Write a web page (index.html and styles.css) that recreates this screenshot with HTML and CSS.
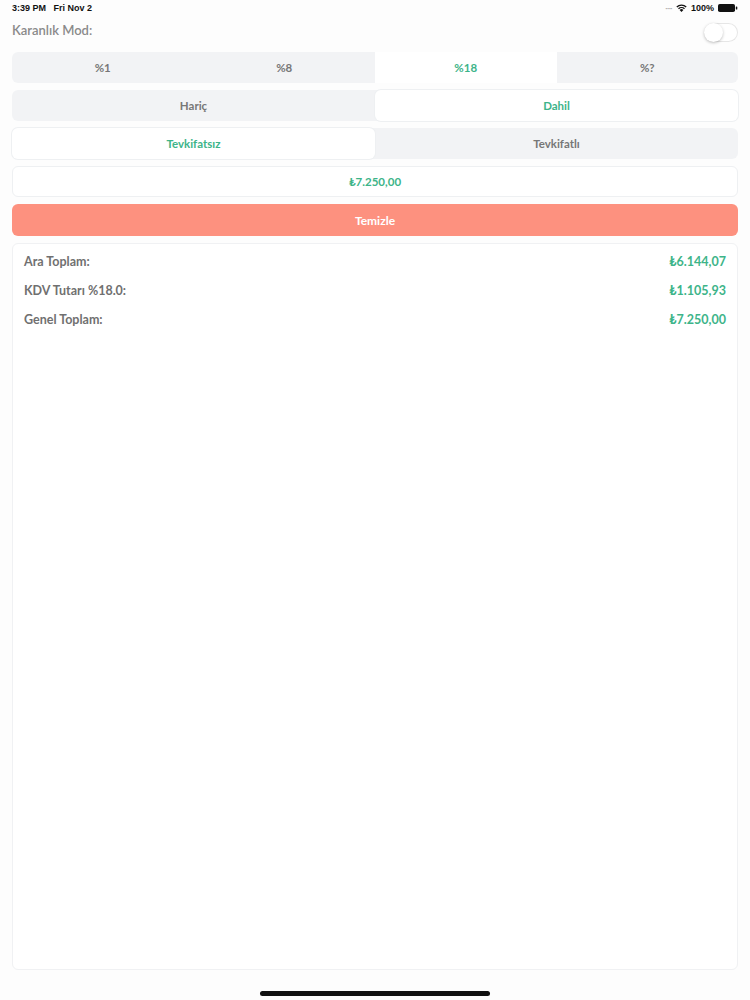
FILE: index.html
```html
<!DOCTYPE html>
<html lang="tr">
<head>
  <meta charset="UTF-8" />
  <meta name="viewport" content="width=device-width, initial-scale=1.0"/>
  <title>KDV Hesaplama</title>
  <link rel="stylesheet" href="styles.css">
</head>
<body>
  <div class="status">
    <span class="time">3:39 PM&nbsp;&nbsp; Fri Nov 2</span>
    <span class="status-right">
      <span class="dots">····</span>
      <svg width="11" height="8" viewBox="0 0 11 8">
        <path d="M5.5 8 L3.6 5.9 A2.7 2.7 0 0 1 7.4 5.9 Z" fill="#111"/>
        <path d="M2.5 4.8 A4.3 4.3 0 0 1 8.5 4.8" stroke="#111" stroke-width="1.3" fill="none"/>
        <path d="M0.8 3 A6.6 6.6 0 0 1 10.2 3" stroke="#111" stroke-width="1.3" fill="none"/>
      </svg>
      <span>100%</span>
      <svg width="20" height="8" viewBox="0 0 20 8">
        <rect x="0" y="0" width="17" height="8" rx="1.8" fill="#111"/>
        <rect x="17.8" y="2.5" width="1.5" height="3" rx="0.6" fill="#111"/>
      </svg>
    </span>
  </div>

  <div class="mode">
    <span>Karanlık Mod:</span>
    <div class="toggle"><div class="knob"></div></div>
  </div>

  <div class="seg seg-4">
    <div class="seg-item">%1</div>
    <div class="seg-item">%8</div>
    <div class="seg-item active">%18</div>
    <div class="seg-item">%?</div>
  </div>

  <div class="seg seg-2">
    <div class="seg-item">Hariç</div>
    <div class="seg-item active">Dahil</div>
  </div>

  <div class="seg seg-2">
    <div class="seg-item active">Tevkifatsız</div>
    <div class="seg-item">Tevkifatlı</div>
  </div>

  <div class="amount">₺7.250,00</div>

  <button class="clear">Temizle</button>

  <div class="card">
    <div class="row"><span>Ara Toplam:</span><span class="val">₺6.144,07</span></div>
    <div class="row"><span>KDV Tutarı %18.0:</span><span class="val">₺1.105,93</span></div>
    <div class="row"><span>Genel Toplam:</span><span class="val">₺7.250,00</span></div>
  </div>

  <div class="home"><div class="home-bar"></div></div>
</body>
</html>
```

FILE: styles.css
```css
html, body {
  margin: 0;
  padding: 0;
}
body {
  font-family: Lato, "Open Sans", sans-serif;
  background: #fdfdfd;
  color: #6c6c6c;
  height: 1000px;
  padding: 0 12px;
  box-sizing: border-box;
  display: flex;
  flex-direction: column;
}
.status {
  height: 16px;
  display: flex;
  justify-content: space-between;
  align-items: center;
  font-family: "Liberation Sans", sans-serif;
  font-size: 9px;
  font-weight: bold;
  color: #111;
}
.status-right {
  display: flex;
  align-items: center;
  gap: 4px;
}
.dots {
  color: #aaa;
  font-size: 8px;
  letter-spacing: -1px;
}
.mode {
  height: 28px;
  display: flex;
  justify-content: space-between;
  align-items: center;
  font-size: 13px;
  color: #8a8a8a;
  font-weight: 600;
  margin-bottom: 8px;
}
.toggle {
  width: 34px;
  height: 19px;
  border-radius: 10px;
  background: #fff;
  box-shadow: inset 0 0 0 1px #e6e6e6;
  position: relative;
  margin-top: 4px;
}
.knob {
  position: absolute;
  left: 0;
  top: 0;
  width: 19px;
  height: 19px;
  border-radius: 50%;
  background: #fff;
  box-shadow: 0 1px 3px rgba(0,0,0,0.25);
}
.seg {
  display: grid;
  height: 31px;
  background: #f2f3f5;
  border-radius: 6px;
  margin-bottom: 7px;
  font-size: 11.5px;
  font-weight: bold;
}
.seg-4 { grid-template-columns: repeat(4, 1fr); }
.seg-2 { grid-template-columns: 1fr 1fr; }
.seg-item {
  display: flex;
  align-items: center;
  justify-content: center;
  color: #777;
}
.seg-item.active {
  background: #fff;
  color: #3db489;
  border-radius: 6px;
  box-shadow: 0 0 0 1px #eef0f2;
}
.seg-4 .seg-item.active {
  border-radius: 0;
  box-shadow: none;
}
.amount {
  height: 31px;
  display: flex;
  align-items: center;
  justify-content: center;
  background: #fff;
  border: 1px solid #eef0f2;
  border-radius: 6px;
  box-sizing: border-box;
  color: #3db489;
  font-size: 11.5px;
  font-weight: bold;
  margin-bottom: 7px;
}
.clear {
  height: 32px;
  border: none;
  border-radius: 6px;
  background: #fd917f;
  color: #fff;
  font-family: inherit;
  font-size: 12px;
  font-weight: bold;
  margin: 0 0 7px;
  cursor: pointer;
}
.card {
  flex: 1;
  background: #fff;
  border: 1px solid #f0f1f3;
  border-radius: 6px;
  padding: 3px 11px 0;
}
.row {
  height: 29px;
  display: flex;
  justify-content: space-between;
  align-items: center;
  font-size: 12.5px;
  font-weight: bold;
  color: #707070;
}
.val {
  color: #3db489;
}
.home {
  height: 30px;
  display: flex;
  justify-content: center;
  padding-top: 21px;
  box-sizing: border-box;
}
.home-bar {
  width: 230px;
  height: 5px;
  border-radius: 3px;
  background: #111;
}
```
